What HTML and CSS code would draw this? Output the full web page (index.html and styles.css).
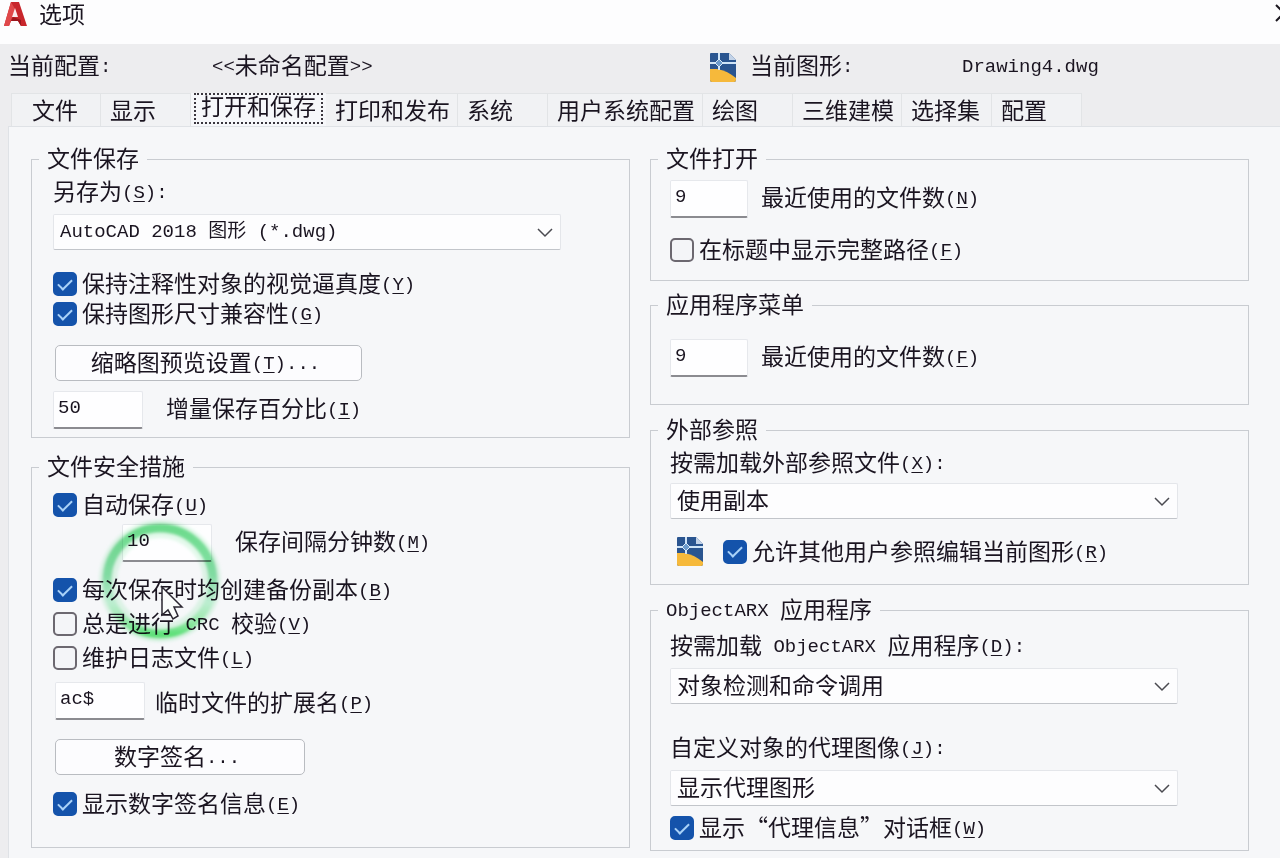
FILE: index.html
```html
<!DOCTYPE html>
<html lang="zh-CN">
<head>
  <meta charset="UTF-8">
  <meta name="viewport" content="width=device-width, initial-scale=1">
  <title>选项</title>
  <link rel="stylesheet" href="styles.css">
</head>
<body>
  <!-- Shared icons -->
  <svg class="defs" aria-hidden="true">
    <symbol id="dwg" viewBox="0 0 28 31">
      <path d="M2 1h18l7 7v20a2 2 0 0 1-2 2H3a2 2 0 0 1-2-2V2a1 1 0 0 1 1-1z" fill="#2a5590"/>
      <path d="M1 17h7c7 1 13 4 19 9v2a2 2 0 0 1-2 2H3a2 2 0 0 1-2-2z" fill="#f6b93b"/>
      <path d="M20 1l7 7h-7z" fill="#c3d3e8"/>
      <path d="M10 1v17M1 11h26" stroke="#cfe4f7" stroke-width="2" fill="none"/>
      <path d="M10 7l4 4-4 4-4-4z" fill="#6d9bcc" stroke="#dcecf9" stroke-width="1"/>
    </symbol>
    <symbol id="chevron" viewBox="0 0 16 10">
      <path d="M1 1l7 7 7-7" fill="none" stroke="#4a4a50" stroke-width="1.5"/>
    </symbol>
  </svg>

  <header class="titlebar">
    <svg class="logo" viewBox="0 0 25 26" aria-hidden="true">
      <path d="M8 1h8l8 24h-6l-3-5H8l-2 5H1z" fill="#c8262c"/>
      <path d="M8 1L1 25h5l6-17z" fill="#e0484a"/>
      <path d="M12 7l3 9H9z" fill="#fbeaec"/>
      <path d="M8 20l2-4 8 3 0 6-3-5z" fill="#9d161d"/>
    </svg>
    <h1>选项</h1>
    <button class="close" type="button" aria-label="关闭">
      <svg viewBox="0 0 18 18"><path d="M1 1l16 16M17 1L1 17" stroke="#1c1820" stroke-width="2"/></svg>
    </button>
  </header>

  <div class="profile">
    <span>当前配置<span class="en">:</span></span>
    <span><span class="en">&lt;&lt;</span>未命名配置<span class="en">&gt;&gt;</span></span>
    <svg class="dwg-icon" aria-hidden="true"><use href="#dwg"/></svg>
    <span>当前图形<span class="en">:</span></span>
    <span><span class="en">Drawing4.dwg</span></span>
  </div>

  <nav class="tabs" role="tablist">
    <button type="button" role="tab" class="tab first">文件</button>
    <button type="button" role="tab" class="tab">显示</button>
    <button type="button" role="tab" class="tab active" aria-selected="true"><span>打开和保存</span></button>
    <button type="button" role="tab" class="tab">打印和发布</button>
    <button type="button" role="tab" class="tab">系统</button>
    <button type="button" role="tab" class="tab">用户系统配置</button>
    <button type="button" role="tab" class="tab">绘图</button>
    <button type="button" role="tab" class="tab">三维建模</button>
    <button type="button" role="tab" class="tab">选择集</button>
    <button type="button" role="tab" class="tab">配置</button>
  </nav>

  <main class="panel">
    <div class="column">
      <!-- File save -->
      <fieldset class="group save">
        <legend>文件保存</legend>
        <label class="caption" for="saveas">另存为<span class="en">(<u>S</u>):</span></label>
        <div class="select">
          <select id="saveas" class="mixed"><option>AutoCAD 2018 图形 (*.dwg)</option></select>
          <svg aria-hidden="true"><use href="#chevron"/></svg>
        </div>
        <div class="checks tight">
          <label class="check"><input type="checkbox" checked><span>保持注释性对象的视觉逼真度<span class="en">(<u>Y</u>)</span></span></label>
          <label class="check"><input type="checkbox" checked><span>保持图形尺寸兼容性<span class="en">(<u>G</u>)</span></span></label>
        </div>
        <button class="push wide" type="button">缩略图预览设置<span class="en">(<u>T</u>)...</span></button>
        <div class="field">
          <input type="text" id="percent" value="50">
          <label for="percent">增量保存百分比<span class="en">(<u>I</u>)</span></label>
        </div>
      </fieldset>

      <!-- File safety -->
      <fieldset class="group safety">
        <legend>文件安全措施</legend>
        <label class="check"><input type="checkbox" checked><span>自动保存<span class="en">(<u>U</u>)</span></span></label>
        <div class="field indent">
          <input type="text" id="minutes" value="10">
          <label for="minutes">保存间隔分钟数<span class="en">(<u>M</u>)</span></label>
        </div>
        <div class="checks">
          <label class="check"><input type="checkbox" checked><span>每次保存时均创建备份副本<span class="en">(<u>B</u>)</span></span></label>
          <label class="check"><input type="checkbox"><span>总是进行<span class="en"> CRC </span>校验<span class="en">(<u>V</u>)</span></span></label>
          <label class="check"><input type="checkbox"><span>维护日志文件<span class="en">(<u>L</u>)</span></span></label>
        </div>
        <div class="field ext">
          <input type="text" id="ext" value="ac$">
          <label for="ext">临时文件的扩展名<span class="en">(<u>P</u>)</span></label>
        </div>
        <button class="push" type="button">数字签名<span class="en">...</span></button>
        <label class="check sign"><input type="checkbox" checked><span>显示数字签名信息<span class="en">(<u>E</u>)</span></span></label>

        <!-- Click highlight and mouse pointer -->
        <svg class="ring" viewBox="0 0 130 130" aria-hidden="true">
          <defs>
            <linearGradient id="green" x1="0" y1="0" x2="0" y2="1">
              <stop offset="0" stop-color="#6cdc8c"/>
              <stop offset="0.45" stop-color="#86e2a6"/>
              <stop offset="0.7" stop-color="#c4f5d6"/>
              <stop offset="0.85" stop-color="#a8f2b8"/>
              <stop offset="1" stop-color="#62e87c"/>
            </linearGradient>
            <filter id="soft"><feGaussianBlur stdDeviation="1.5"/></filter>
          </defs>
          <g fill="none" filter="url(#soft)">
            <circle cx="65" cy="65" r="52" stroke="#c9f6d8" stroke-opacity="0.5" stroke-width="18"/>
            <circle cx="65" cy="65" r="53" stroke="url(#green)" stroke-width="9"/>
          </g>
        </svg>
        <svg class="pointer" viewBox="0 0 24 36" aria-hidden="true">
          <path d="M2 2v28l6-5 5 9 5-3-4-9h8z" fill="#fafcfb" stroke="#2a2630" stroke-width="1.5"/>
        </svg>
      </fieldset>
    </div>

    <div class="column right">
      <!-- File open -->
      <fieldset class="group open">
        <legend>文件打开</legend>
        <div class="field narrow">
          <input type="text" id="recent" value="9">
          <label for="recent">最近使用的文件数<span class="en">(<u>N</u>)</span></label>
        </div>
        <label class="check path"><input type="checkbox"><span>在标题中显示完整路径<span class="en">(<u>F</u>)</span></span></label>
      </fieldset>

      <!-- Application menu -->
      <fieldset class="group menu">
        <legend>应用程序菜单</legend>
        <div class="field narrow">
          <input type="text" id="menurecent" value="9">
          <label for="menurecent">最近使用的文件数<span class="en">(<u>F</u>)</span></label>
        </div>
      </fieldset>

      <!-- External references -->
      <fieldset class="group xref">
        <legend>外部参照</legend>
        <label class="caption" for="xref">按需加载外部参照文件<span class="en">(<u>X</u>):</span></label>
        <div class="select">
          <select id="xref"><option>使用副本</option></select>
          <svg aria-hidden="true"><use href="#chevron"/></svg>
        </div>
        <div class="icon-row">
          <svg class="dwg-icon" aria-hidden="true"><use href="#dwg"/></svg>
          <label class="check"><input type="checkbox" checked><span>允许其他用户参照编辑当前图形<span class="en">(<u>R</u>)</span></span></label>
        </div>
      </fieldset>

      <!-- ObjectARX -->
      <fieldset class="group arx">
        <legend><span class="en">ObjectARX </span>应用程序</legend>
        <label class="caption" for="arx">按需加载<span class="en"> ObjectARX </span>应用程序<span class="en">(<u>D</u>):</span></label>
        <div class="select">
          <select id="arx"><option>对象检测和命令调用</option></select>
          <svg aria-hidden="true"><use href="#chevron"/></svg>
        </div>
        <label class="caption proxy" for="proxy">自定义对象的代理图像<span class="en">(<u>J</u>):</span></label>
        <div class="select">
          <select id="proxy"><option>显示代理图形</option></select>
          <svg aria-hidden="true"><use href="#chevron"/></svg>
        </div>
        <label class="check info"><input type="checkbox" checked><span>显示“代理信息”对话框<span class="en">(<u>W</u>)</span></span></label>
      </fieldset>
    </div>
  </main>
</body>
</html>
```
FILE: styles.css
```css
* {
  box-sizing: border-box;
}
body {
  margin: 0;
  min-height: 100vh;
  display: flex;
  flex-direction: column;
  background: #ededef;
  color: #1a1420;
  font-family: "Noto Sans CJK SC", sans-serif;
  font-size: 23px;
  line-height: 24px;
  white-space: nowrap;
  overflow: hidden;
}
button, input, select {
  font: inherit;
  color: inherit;
  margin: 0;
}
.defs {
  position: absolute;
  width: 0;
  height: 0;
}
/* Half-width text inside Chinese labels */
.en {
  font-family: "Liberation Mono", monospace;
  font-size: 19px;
  line-height: 0;
  vertical-align: 2px;
  white-space: pre;
}
u {
  text-decoration-thickness: 1px;
  text-underline-offset: 3px;
}

/* Title bar */
.titlebar {
  display: flex;
  align-items: flex-start;
  height: 44px;
  padding: 1px 0 0 3px;
  background: #fdfdfe;
  overflow: hidden;
}
.logo {
  width: 25px;
  height: 26px;
}
h1 {
  margin: 0 auto 0 11px;
  font-size: 23px;
  font-weight: 400;
}
.close {
  flex: none;
  width: 18px;
  margin: 3px -13px 0 0;
  padding: 0;
  border: 0;
  background: none;
}
.close svg {
  display: block;
}

/* Current profile and drawing */
.profile {
  display: grid;
  grid-template-columns: 204px minmax(0, 497px) 41px 212px 1fr;
  align-items: center;
  height: 49px;
  padding: 0 8px 3px;
}
.profile > span {
  padding-bottom: 6px;
}
.dwg-icon {
  width: 28px;
  height: 31px;
}

/* Tabs */
.tabs {
  display: flex;
  height: 33px;
  padding-left: 11px;
}
.tab {
  min-width: 90px;
  padding: 0 7px 3px 9px;
  border: 1px solid #e2e4e6;
  border-width: 1px 1px 0 0;
  background: #f1f2f4;
  text-align: left;
}
.tab.first {
  padding-left: 20px;
  border-left-width: 1px;
}
.tab.active {
  display: flex;
  align-items: flex-start;
  padding: 0 3px;
  border: 0;
  background: #f6f7fa;
}
.tab.active span {
  height: 31px;
  padding: 0 5px;
  border: 2px dotted #3a363e;
  line-height: 20px;
}

/* Panel with two columns of groups */
.panel {
  flex: 1;
  display: grid;
  grid-template-columns: 1fr 1fr;
  gap: 20px;
  margin-left: 8px;
  padding: 20px 31px 7px 22px;
  border: 1px solid #dfe2e6;
  border-width: 1px 0 0 1px;
  background: #f6f7f9;
}
.column {
  display: flex;
  flex-direction: column;
}
.group {
  position: relative;
  display: flex;
  flex-direction: column;
  align-items: flex-start;
  min-width: 0;
  margin: 0;
  padding: 0 68px 0 21px;
  border: 1px solid #c9ccd1;
}
.right .group {
  padding-left: 19px;
  padding-right: 70px;
}
legend {
  height: 24px;
  margin-left: -14px;
  padding: 0 8px;
  line-height: 20px;
}
.right legend {
  margin-left: -12px;
}
.save { padding-bottom: 8px; }
.safety { margin-top: 17px; padding-bottom: 31px; }
.open { padding-bottom: 18px; }
.menu { margin-top: 12px; padding-bottom: 27px; }
.xref { margin-top: 13px; padding-bottom: 17px; }
.arx { margin-top: 13px; padding-bottom: 10px; }

.caption {
  margin-top: 7px;
}
.arx .caption {
  margin-top: 10px;
}
.arx .proxy {
  margin-top: 30px;
}

/* Drop-downs */
.select {
  position: relative;
  width: 100%;
  margin-top: 12px;
}
.xref .select {
  margin-top: 10px;
}
select {
  display: block;
  width: 100%;
  height: 36px;
  padding: 0 40px 4px 6px;
  appearance: none;
  border: 1px solid #e4e6ea;
  border-bottom-color: #c2c5ca;
  border-radius: 2px;
  background: #fdfdfe;
}
select.mixed {
  padding-bottom: 0;
  font-family: "Liberation Mono", "Noto Sans CJK SC", monospace;
  font-size: 19px;
}
.select svg {
  position: absolute;
  top: 14px;
  right: 8px;
  width: 16px;
  height: 10px;
  pointer-events: none;
}

/* Tick boxes */
.check {
  display: flex;
  align-items: center;
  height: 24px;
}
.check > span {
  padding-bottom: 4px;
}
.check input {
  appearance: none;
  display: grid;
  place-items: center;
  flex: none;
  width: 24px;
  height: 24px;
  margin-right: 5px;
  border: 2px solid #6c6870;
  border-radius: 5px;
  background: #f4f5f8;
}
.check input:checked {
  border-color: #1453ab;
  background: #1453ab;
}
.check input:checked::before {
  content: "";
  width: 12px;
  height: 6px;
  margin-bottom: 3px;
  border: solid #a9d2f8;
  border-width: 0 0 2px 2px;
  transform: rotate(-45deg);
}
.checks {
  display: grid;
  gap: 10px;
  margin-top: 16px;
}
.checks.tight {
  gap: 6px;
  margin-top: 22px;
}
.safety > .check {
  margin-top: 14px;
}
.safety > .sign {
  margin-top: 17px;
}
.path {
  margin-top: 20px;
}
.info {
  margin-top: 10px;
}

/* Push buttons */
.push {
  width: 250px;
  height: 36px;
  margin: 19px 0 0 2px;
  padding: 0 6px 4px 0;
  border: 1px solid #b9bcc1;
  border-radius: 5px;
  background: #fcfcfe;
}
.push.wide {
  width: 307px;
}

/* Text boxes with a label after them */
.field {
  display: flex;
  align-items: center;
  gap: 23px;
  margin-top: 10px;
}
.field label {
  padding-bottom: 6px;
}
.field input {
  width: 90px;
  height: 38px;
  padding: 0 4px 4px;
  border: 1px solid #e6e8ec;
  border-bottom: 2px solid #8b8b90;
  border-radius: 2px;
  background: #fefeff;
  font-family: "Liberation Mono", monospace;
  font-size: 19px;
}
.field.indent {
  margin: 7px 0 0 69px;
}
.field.ext {
  gap: 10px;
  margin: 12px 0 0 2px;
}
.field.ext label {
  padding-bottom: 0;
}
.field.narrow {
  gap: 13px;
  margin-top: 9px;
}
.field.narrow input {
  width: 78px;
}
.menu .narrow {
  margin-top: 22px;
}
.icon-row {
  display: flex;
  align-items: center;
  gap: 19px;
  margin: 17px 0 0 6px;
}

/* Highlight and pointer lie over the file safety group */
.ring {
  position: absolute;
  top: 37px;
  left: 63px;
  width: 130px;
  height: 130px;
  pointer-events: none;
  mix-blend-mode: multiply;
}
.pointer {
  position: absolute;
  top: 106px;
  left: 128px;
  width: 24px;
  height: 36px;
  pointer-events: none;
}
```
